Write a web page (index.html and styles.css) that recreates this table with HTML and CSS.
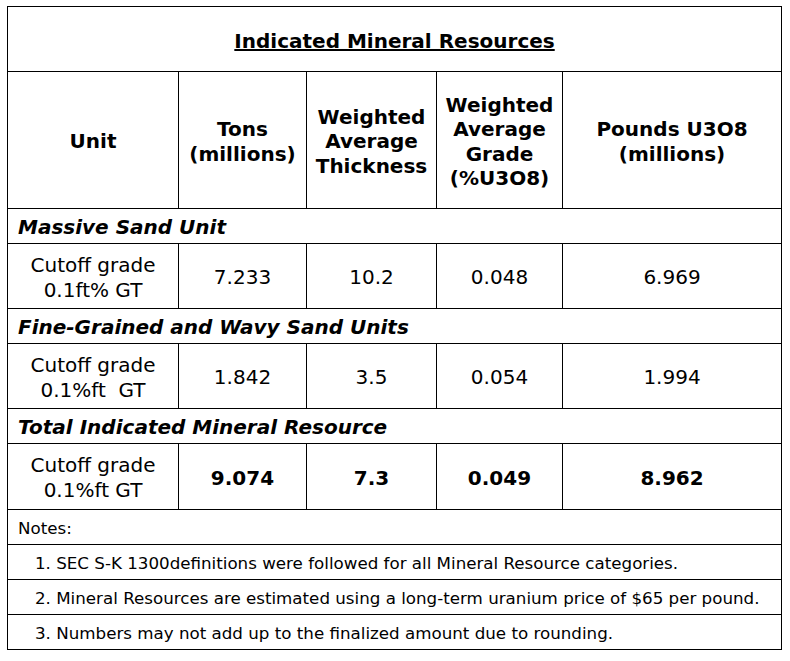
FILE: index.html
```html
<!DOCTYPE html>
<html>
<head>
<meta charset="utf-8">
<link rel="stylesheet" href="styles.css">
</head>
<body>
<table class="res">
  <colgroup>
    <col class="c1"><col class="c2"><col class="c3"><col class="c4"><col class="c5">
  </colgroup>
  <tr class="r-title"><td colspan="5" class="title"><span>Indicated Mineral Resources</span></td></tr>
  <tr class="r-head">
    <th>Unit</th>
    <th>Tons<br>(millions)</th>
    <th>Weighted<br>Average<br>Thickness</th>
    <th>Weighted<br>Average<br>Grade<br>(%U3O8)</th>
    <th>Pounds U3O8<br>(millions)</th>
  </tr>
  <tr class="r-sec"><td colspan="5" class="sec">Massive Sand Unit</td></tr>
  <tr class="r-data">
    <td>Cutoff grade<br>0.1ft% GT</td><td>7.233</td><td>10.2</td><td>0.048</td><td>6.969</td>
  </tr>
  <tr class="r-sec"><td colspan="5" class="sec">Fine-Grained and Wavy Sand Units</td></tr>
  <tr class="r-data">
    <td>Cutoff grade<br>0.1%ft&nbsp; GT</td><td>1.842</td><td>3.5</td><td>0.054</td><td>1.994</td>
  </tr>
  <tr class="r-sec r-sec3"><td colspan="5" class="sec">Total Indicated Mineral Resource</td></tr>
  <tr class="r-data r-total">
    <td>Cutoff grade<br>0.1%ft GT</td><td class="b">9.074</td><td class="b">7.3</td><td class="b">0.049</td><td class="b">8.962</td>
  </tr>
  <tr class="r-note"><td colspan="5" class="notes">Notes:</td></tr>
  <tr class="r-note"><td colspan="5" class="note">1. SEC S-K 1300definitions were followed for all Mineral Resource categories.</td></tr>
  <tr class="r-note"><td colspan="5" class="note">2. Mineral Resources are estimated using a long-term uranium price of $65 per pound.</td></tr>
  <tr class="r-note"><td colspan="5" class="note">3. Numbers may not add up to the finalized amount due to rounding.</td></tr>
</table>
</body>
</html>
```

FILE: styles.css
```css
html, body {
  margin: 0;
  padding: 0;
  background: #ffffff;
}
body {
  padding: 6px 0 0 7px;
  font-family: "DejaVu Sans", Verdana, sans-serif;
  color: #000000;
}
.res {
  border-collapse: collapse;
  table-layout: fixed;
  width: 774px;
  font-size: 20px;
}
.c1 { width: 171px; }
.c2 { width: 128px; }
.c3 { width: 130px; }
.c4 { width: 126px; }
.c5 { width: 219px; }
.res td, .res th {
  border: 1px solid #000000;
  padding: 0;
  text-align: center;
  vertical-align: middle;
  line-height: 25px;
}
.r-title { height: 65px; }
.title {
  font-weight: bold;
  padding-top: 4px !important;
}
.title span { text-decoration: underline; }
.r-head { height: 137px; }
.r-head th { font-weight: bold; line-height: 24.5px; padding-top: 3px; }
.r-sec { height: 35px; }
.sec {
  text-align: left !important;
  font-weight: bold;
  font-style: italic;
  padding-left: 10px !important;
  padding-top: 2px !important;
}
.r-data { height: 65px; }
.r-data td { padding-top: 3px; }
.r-total { height: 66px; }
.b { font-weight: bold; }
.r-note { height: 35px; }
.notes, .note {
  text-align: left !important;
  font-size: 16.7px;
  padding-top: 2px !important;
}
.notes { padding-left: 10px !important; }
.note { padding-left: 27px !important; }
```
